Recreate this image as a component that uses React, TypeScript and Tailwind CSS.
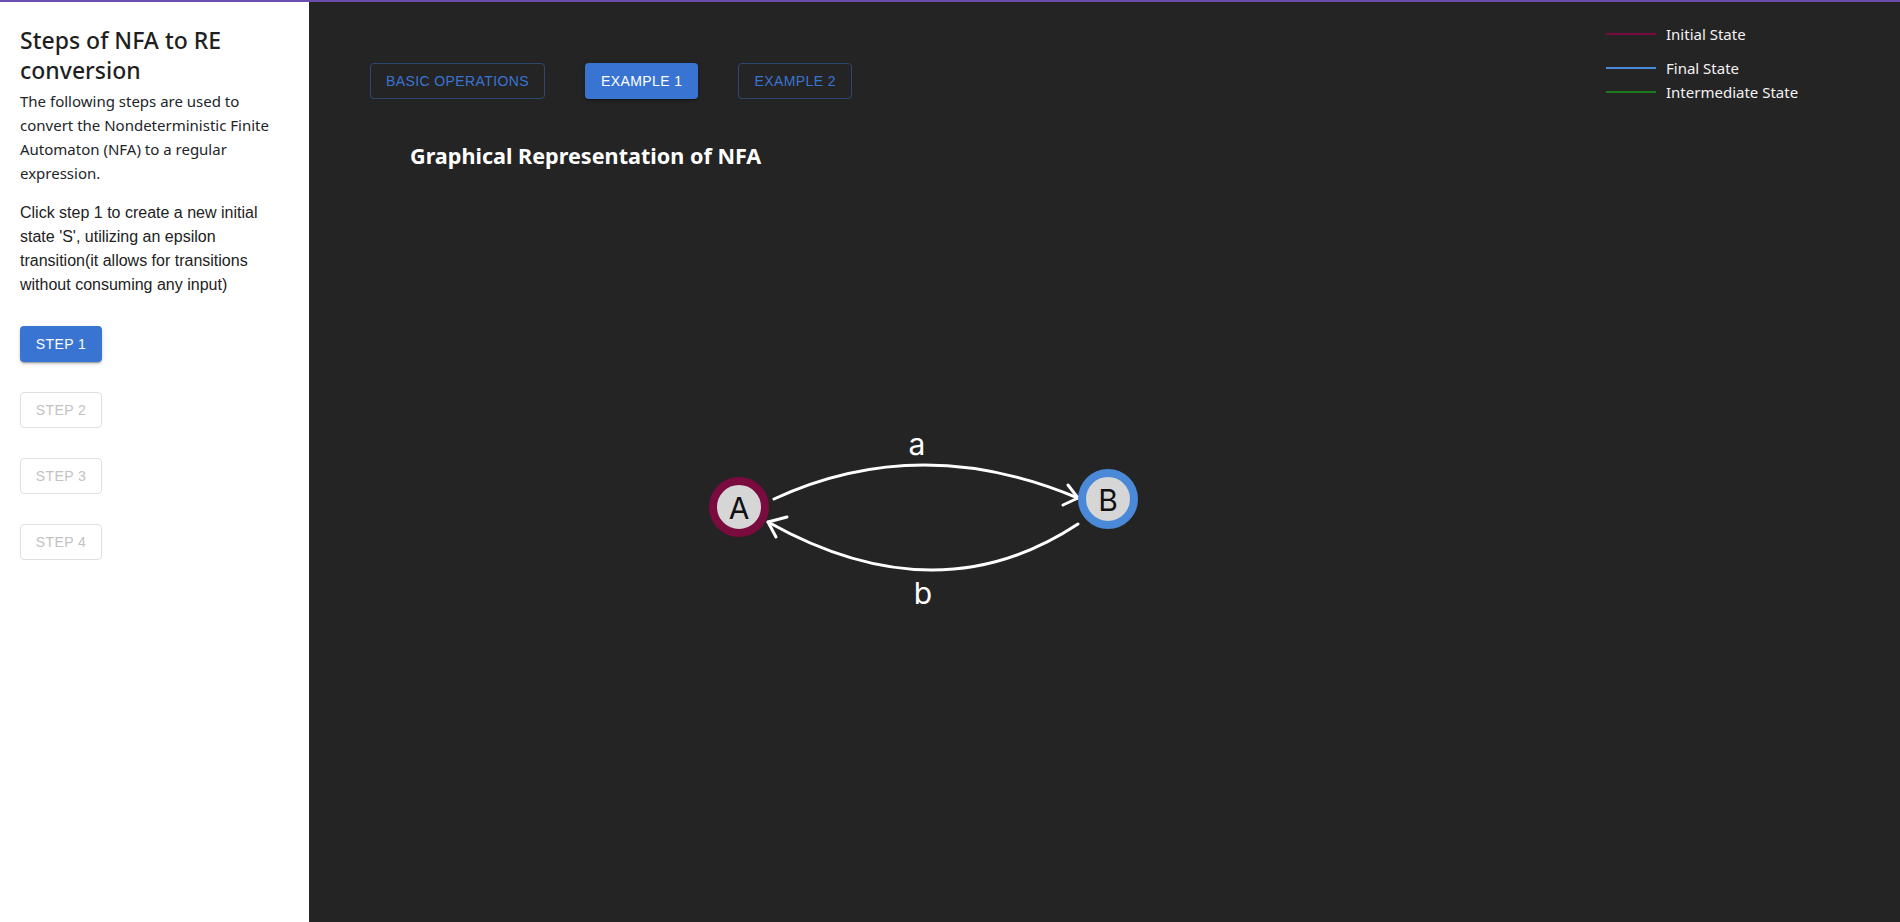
import * as React from 'react';

const steps = ['Step 1', 'Step 2', 'Step 3', 'Step 4'];

const raised =
  'shadow-[0_3px_1px_-2px_rgba(0,0,0,0.2),0_2px_2px_0_rgba(0,0,0,0.14),0_1px_5px_0_rgba(0,0,0,0.12)]';

function Legend() {
  return (
    <div className="w-[294px] shrink-0 pt-[21px] text-[15px] text-[#f2f2f2] font-['Noto_Sans',sans-serif]">
      <div className="flex items-center gap-[10px] h-[22px]">
        <span className="w-[50px] h-[2px] bg-[#7a0b3e]" />
        <span>Initial State</span>
      </div>
      <div className="flex items-center gap-[10px] h-[22px] mt-[12px]">
        <span className="w-[50px] h-[2px] bg-[#4a89d8]" />
        <span>Final State</span>
      </div>
      <div className="flex items-center gap-[10px] h-[22px] mt-[2px]">
        <span className="w-[50px] h-[2px] bg-[#1c7a1c]" />
        <span>Intermediate State</span>
      </div>
    </div>
  );
}

function Graph() {
  // node positions are the content of this canvas
  return (
    <svg width="900" height="480" className="-ml-[10px] mt-[31px] block">
      <g fill="none" stroke="#ffffff" strokeWidth="3" strokeLinecap="round" strokeLinejoin="round">
        <path d="M414 297 Q560 229.5 718 296" />
        <path d="M703 303 L718 296 L708 283" />
        <path d="M718 322 Q577 415 408 320" />
        <path d="M416 335 L408 320 L427 315" />
      </g>
      <g fontFamily="Inter, 'Noto Sans', sans-serif" fontSize="30" textAnchor="middle">
        <text x="557" y="253" fill="#ffffff">a</text>
        <text x="563" y="402" fill="#ffffff">b</text>
      </g>
      <circle cx="379" cy="305" r="26" fill="#d6d6d6" stroke="#7a0b3e" strokeWidth="8" />
      <circle cx="748" cy="297" r="26" fill="#d6d6d6" stroke="#4a89d8" strokeWidth="8" />
      <g fontFamily="Inter, 'Noto Sans', sans-serif" fontSize="30" textAnchor="middle" fill="#111111">
        <text x="379" y="317">A</text>
        <text x="748" y="309">B</text>
      </g>
    </svg>
  );
}

export default function App() {
  return (
    <div className="flex flex-col h-[922px] w-full overflow-hidden bg-[#242424]">
      <div className="h-[2px] shrink-0 bg-[#6a4fae]" />
      <div className="flex flex-1 min-h-0">
        <aside className="w-[309px] shrink-0 bg-white px-[20px] pt-[23px] text-[#212529]">
          <h2 className="text-[23px] leading-[30px] font-medium font-['Noto_Sans',sans-serif] text-[#1f1f1f]">
            Steps of NFA to RE conversion
          </h2>
          <p className="mt-[4px] text-[15px] leading-[24px] font-['Noto_Sans',sans-serif]">
            The following steps are used to convert the Nondeterministic Finite Automaton (NFA) to a regular expression.
          </p>
          <p className="mt-[16px] text-[16px] leading-[24px] font-['Liberation_Sans',Arial,sans-serif] text-[#222]">
            Click step 1 to create a new initial state 'S', utilizing an epsilon transition(it allows for transitions without consuming any input)
          </p>
          <div className="mt-[29px] flex flex-col items-start gap-[30px]">
            {steps.map((s, i) =>
              i === 0 ? (
                <button
                  key={s}
                  className={`h-[36px] w-[82px] rounded-[4px] bg-[#3a74d3] text-white text-[14px] uppercase tracking-[0.4px] font-['Liberation_Sans',Arial,sans-serif] ${raised}`}
                >
                  {s}
                </button>
              ) : (
                <button
                  key={s}
                  disabled
                  className="h-[36px] w-[82px] rounded-[4px] border border-[#e0e0e0] text-[#c2c2c2] text-[14px] uppercase tracking-[0.4px] font-['Liberation_Sans',Arial,sans-serif]"
                >
                  {s}
                </button>
              )
            )}
          </div>
        </aside>
        <main className="flex flex-1 min-w-0">
          <div className="flex-1 min-w-0 pl-[61px] pt-[61px]">
            <div className="flex items-center gap-[40px] font-['Liberation_Sans',Arial,sans-serif] text-[14px]">
              <button className="h-[36px] px-[15px] rounded-[4px] border border-[#2c4770] text-[#3a74d3] uppercase tracking-[0.4px]">
                Basic Operations
              </button>
              <button className={`h-[36px] px-[16px] rounded-[4px] bg-[#3a74d3] text-white uppercase tracking-[0.4px] ${raised}`}>
                Example 1
              </button>
              <button className="h-[36px] px-[15px] rounded-[4px] border border-[#2c4770] text-[#3a74d3] uppercase tracking-[0.4px]">
                Example 2
              </button>
            </div>
            <h3 className="ml-[40px] mt-[42px] text-[21.6px] leading-[30px] font-bold text-white font-['Noto_Sans',sans-serif]">
              Graphical Representation of NFA
            </h3>
            <Graph />
          </div>
          <Legend />
        </main>
      </div>
    </div>
  );
}
